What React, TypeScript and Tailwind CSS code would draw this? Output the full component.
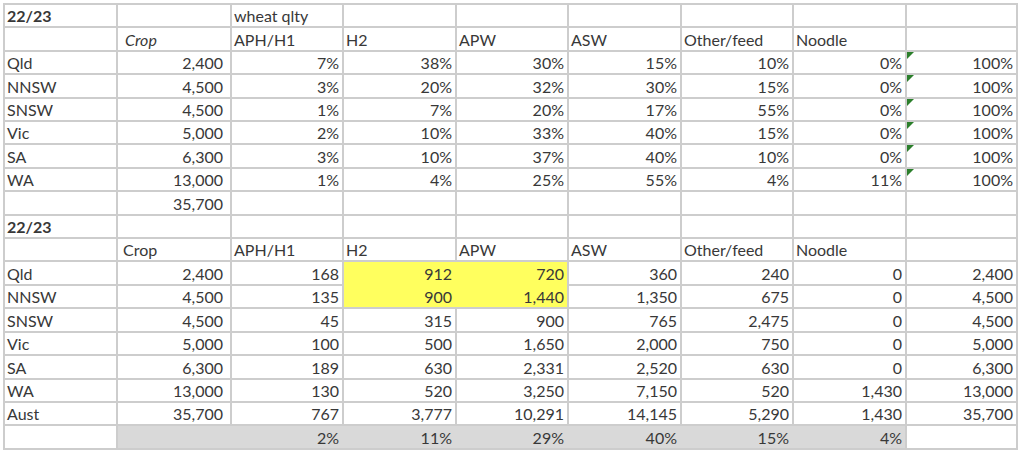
import React from "react";

type Cell = { v: string; align?: "l" | "r"; bold?: boolean; italic?: boolean; pl?: string; pr?: string; flag?: boolean };

const L = (v: string, extra: Partial<Cell> = {}): Cell => ({ v, align: "l", ...extra });
const R = (v: string, extra: Partial<Cell> = {}): Cell => ({ v, align: "r", ...extra });
const E: Cell = { v: "" };

const heads = ["APH/H1", "H2", "APW", "ASW", "Other/feed", "Noodle"];

const share: [string, string, string[]][] = [
  ["Qld", "2,400", ["7%", "38%", "30%", "15%", "10%", "0%"]],
  ["NNSW", "4,500", ["3%", "20%", "32%", "30%", "15%", "0%"]],
  ["SNSW", "4,500", ["1%", "7%", "20%", "17%", "55%", "0%"]],
  ["Vic", "5,000", ["2%", "10%", "33%", "40%", "15%", "0%"]],
  ["SA", "6,300", ["3%", "10%", "37%", "40%", "10%", "0%"]],
  ["WA", "13,000", ["1%", "4%", "25%", "55%", "4%", "11%"]],
];

const tonnes: [string, string, string[], string][] = [
  ["Qld", "2,400", ["168", "912", "720", "360", "240", "0"], "2,400"],
  ["NNSW", "4,500", ["135", "900", "1,440", "1,350", "675", "0"], "4,500"],
  ["SNSW", "4,500", ["45", "315", "900", "765", "2,475", "0"], "4,500"],
  ["Vic", "5,000", ["100", "500", "1,650", "2,000", "750", "0"], "5,000"],
  ["SA", "6,300", ["189", "630", "2,331", "2,520", "630", "0"], "6,300"],
  ["WA", "13,000", ["130", "520", "3,250", "7,150", "520", "1,430"], "13,000"],
  ["Aust", "35,700", ["767", "3,777", "10,291", "14,145", "5,290", "1,430"], "35,700"],
];

function Td({ c, bg = "bg-white" }: { c: Cell; bg?: string }) {
  return (
    <div
      className={`relative flex items-end pb-[2px] leading-none whitespace-nowrap overflow-hidden ${bg} ${
        c.align === "r" ? "justify-end" : "justify-start"
      } ${c.align === "r" ? c.pr ?? "pr-[3px]" : c.pl ?? "pl-[2px]"} ${c.bold ? "font-bold" : ""} ${c.italic ? "italic" : ""}`}
    >
      {c.flag ? (
        <span className="absolute left-0 top-0 w-0 h-0 border-t-[7px] border-r-[7px] border-t-[#2b7f2b] border-r-transparent" />
      ) : null}
      {c.v}
    </div>
  );
}

export default function App() {
  const rows: Cell[][] = [];
  rows.push([L("22/23", { bold: true }), E, L("wheat qlty"), E, E, E, E, E, E]);
  rows.push([E, L("Crop", { italic: true, pl: "pl-[7px]" }), ...heads.map((h) => L(h)), E]);
  share.forEach(([st, crop, vals]) =>
    rows.push([L(st), R(crop, { pr: "pr-[7px]" }), ...vals.map((v) => R(v)), R("100%", { flag: true })])
  );
  rows.push([E, R("35,700", { pr: "pr-[7px]" }), E, E, E, E, E, E, E]);
  rows.push([L("22/23", { bold: true }), E, E, E, E, E, E, E, E]);
  rows.push([E, L("Crop", { pl: "pl-[5px]" }), ...heads.map((h) => L(h)), E]);

  return (
    <div className="min-h-screen bg-white pl-[3px] pt-[3px] text-[16px] text-[#383838] [font-family:Lato,'Liberation_Sans',sans-serif]">
      <div className="grid w-fit grid-cols-[111px_112px_110px_111px_110px_111px_110px_111px_109px] auto-rows-[21.42px] gap-[2px] bg-[#cdcdcd] p-[2px]">
        {rows.map((r, i) => r.map((c, j) => <Td key={`${i}-${j}`} c={c} />))}

        {tonnes.map(([st, crop, vals, total], i) => {
          const hi = i < 2;
          return (
            <React.Fragment key={st}>
              <Td c={L(st)} />
              <Td c={R(crop, { pr: "pr-[7px]" })} />
              <Td c={R(vals[0])} />
              {hi ? (
                i === 0 ? (
                  <div className="col-span-2 row-span-2 grid grid-cols-[111px_110px] auto-rows-[21.42px] gap-[2px] bg-[#ffff5e]">
                    {[tonnes[0][2][1], tonnes[0][2][2], tonnes[1][2][1], tonnes[1][2][2]].map((v, k) => (
                      <Td key={k} c={R(v)} bg="bg-[#ffff5e]" />
                    ))}
                  </div>
                ) : null
              ) : (
                <>
                  <Td c={R(vals[1])} />
                  <Td c={R(vals[2])} />
                </>
              )}
              <Td c={R(vals[3])} />
              <Td c={R(vals[4])} />
              <Td c={R(vals[5])} />
              <Td c={R(total)} />
            </React.Fragment>
          );
        })}

        <Td c={E} />
        <div className="col-span-7 grid grid-cols-[112px_110px_111px_110px_111px_110px_111px] gap-[2px] bg-[#d9d9d9]">
          {["", "2%", "11%", "29%", "40%", "15%", "4%"].map((v, k) => (
            <Td key={k} c={R(v)} bg="bg-[#d9d9d9]" />
          ))}
        </div>
        <Td c={E} />
      </div>
    </div>
  );
}
